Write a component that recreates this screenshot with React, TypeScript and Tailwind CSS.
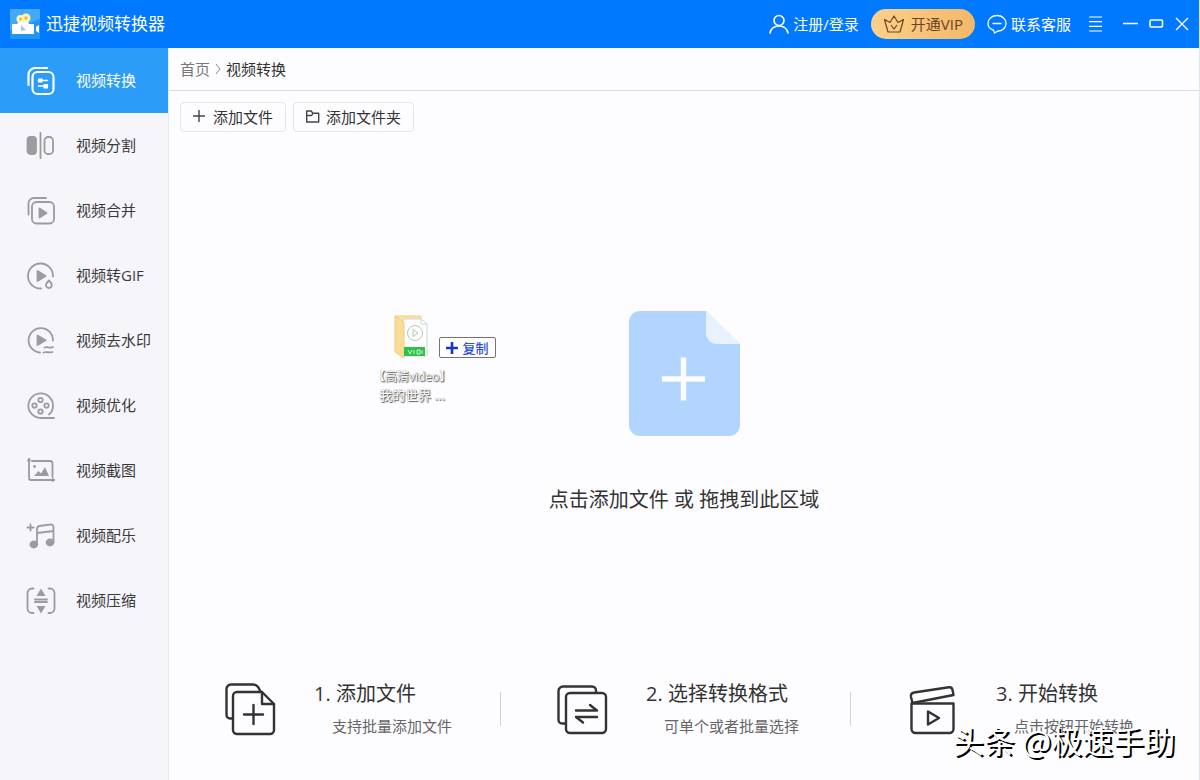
import type { ReactNode } from "react";

type IconProps = { children: ReactNode };

function NavIcon({ children }: IconProps) {
  return (
    <svg
      viewBox="0 0 30 30"
      className="h-[30px] w-[30px] shrink-0"
      fill="none"
      stroke="currentColor"
      strokeWidth="1.8"
      strokeLinecap="round"
      strokeLinejoin="round"
      aria-hidden="true"
    >
      {children}
    </svg>
  );
}

const NAV = [
  {
    label: "视频转换",
    icon: (
      <g strokeWidth="2.2">
        <path d="M2.5 19V8.500A6.500 6.500 0 0 1 9 2h12" />
        <rect x="6.500" y="6" width="21" height="22" rx="5" />
        <path d="M12.500 14.500h9M12.500 20h9" strokeWidth="1.600" />
        <path d="M12 12.500h4.500v4H12zM17.500 18h4.500v4.500h-4.500z" fill="currentColor" stroke="none" />
      </g>
    ),
  },
  {
    label: "视频分割",
    icon: (
      <>
        <rect x="1.500" y="6" width="8.500" height="17" rx="3" fill="currentColor" />
        <path d="M14.500 2v25" />
        <rect x="18.500" y="6" width="8.500" height="17" rx="3.500" />
      </>
    ),
  },
  {
    label: "视频合并",
    icon: (
      <>
        <path d="M2.500 18.500V7.500a5.500 5.500 0 0 1 5.500-5.500h12" />
        <rect x="6" y="6" width="22" height="21.500" rx="4.500" />
        <path d="M13.500 12.500v9l7-4.500z" fill="currentColor" />
      </>
    ),
  },
  {
    label: "视频转GIF",
    icon: (
      <>
        <path d="M15 27.500A12.500 12.500 0 1 1 27 15.500" />
        <path d="M11.500 10v10l8-5z" fill="currentColor" />
        <path d="M23 19.500c2 2 2.800 3.200 2.800 4.600a2.900 2.900 0 0 1-5.800 0c0-1.400 1-2.600 3-4.600z" />
      </>
    ),
  },
  {
    label: "视频去水印",
    icon: (
      <>
        <path d="M14 26.500A12.200 12.200 0 1 1 27 14.500" />
        <path d="M11.500 9.500v9.500l8-4.700z" fill="currentColor" />
        <path d="M18.500 21.500c3-1.500 5 1.200 8.500-.5M17.500 26.500c3.500-1.500 5.500 1 9-.5" />
      </>
    ),
  },
  {
    label: "视频优化",
    icon: (
      <>
        <path d="M28 27H14.500A12.300 12.300 0 1 1 27 15c0 4-1.500 6.500-4 8.500" />
        <circle cx="14.500" cy="9" r="2.200" />
        <circle cx="8.500" cy="14.500" r="2.200" />
        <circle cx="20.500" cy="14.500" r="2.200" />
        <circle cx="14.500" cy="20.500" r="2.200" />
      </>
    ),
  },
  {
    label: "视频截图",
    icon: (
      <>
        <path d="M3 3v19a2 2 0 0 0 2 2h23M6 5h18a2.500 2.500 0 0 1 2.500 2.500V21" />
        <path d="M2 4.500 3 3l1 1.500M26.500 23 28 24l-1.500 1" />
        <path d="M8 20l4.500-5 2.500 2.500 4-6.500 4 9z" fill="currentColor" stroke="none" />
        <circle cx="8.500" cy="10.500" r="1.400" fill="currentColor" stroke="none" />
      </>
    ),
  },
  {
    label: "视频配乐",
    icon: (
      <>
        <path d="M11 23V8a3 3 0 0 1 2.500-3l11-1.500a2.500 2.500 0 0 1 3 2.500v15.500M11 12l16.500-2" />
        <ellipse cx="7.800" cy="23.500" rx="3.400" ry="3" fill="currentColor" />
        <ellipse cx="24" cy="21.500" rx="3.400" ry="3" fill="currentColor" />
        <path d="M4.500 3.500v6M1.500 6.500h6" />
      </>
    ),
  },
  {
    label: "视频压缩",
    icon: (
      <>
        <path d="M7.500 2.500H6A4.500 4.500 0 0 0 1.500 7v15.500A4.500 4.500 0 0 0 6 27h1.500M22.500 2.500H24A4.500 4.500 0 0 1 28.500 7v15.500A4.500 4.500 0 0 1 24 27h-1.500" />
        <path d="M9 13.500h12M9 16h12" />
        <path d="M15 2.500 19.500 10h-9zM15 27.500 19.500 20h-9z" fill="currentColor" stroke="none" />
      </>
    ),
  },
];

const STEPS = [
  {
    title: "1. 添加文件",
    desc: "支持批量添加文件",
    icon: (
      <>
        <path d="M7 35.500H5A3.500 3.500 0 0 1 1.500 32V6A4.500 4.500 0 0 1 6 1.500h22c3 0 5.500 2.500 7 6" />
        <path d="M37 9H12a4 4 0 0 0-4 4v34a4 4 0 0 0 4 4h33a4 4 0 0 0 4-4V21z" />
        <path d="M37 9v12h12M28.500 22v19M19 31.500h19" />
      </>
    ),
  },
  {
    title: "2. 选择转换格式",
    desc: "可单个或者批量选择",
    icon: (
      <>
        <path d="M8 40.500H5A3.500 3.500 0 0 1 1.500 37V8A4.500 4.500 0 0 1 6 3.500h29a4 4 0 0 1 4 4V9" />
        <rect x="9" y="10" width="40" height="40" rx="4" />
        <path d="M19 27.500h21l-7-5.500M40 34H19l7 5.500" />
      </>
    ),
  },
  {
    title: "3. 开始转换",
    desc: "点击按钮开始转换",
    icon: (
      <>
        <path d="M5.500 20 4 14c-.5-2.500.5-4 3-4.500l35-5.200c2-.3 3 .5 3.500 2.500l1 5.200z" />
        <path d="M4.500 20.500h42V46a4 4 0 0 1-4 4h-34a4 4 0 0 1-4-4z" />
        <path d="M21 28.500v13l11-6.500z" />
      </>
    ),
  },
];

function TopBar() {
  return (
    <header className="flex h-12 items-center bg-[#0078ff] pl-2.5 pr-2 text-[15px] text-white">
      <svg viewBox="0 0 30 30" className="h-[30px] w-[30px] shrink-0" aria-hidden="true">
        <rect width="30" height="30" fill="#2295f3" />
        <path d="M0 0h30v10L0 22z" fill="#45aaf6" />
        <circle cx="10.500" cy="10" r="4" fill="#fff3b0" />
        <circle cx="16" cy="9" r="4.500" fill="#fff3b0" />
        <circle cx="10.500" cy="10" r="1.500" fill="#e3b94a" />
        <circle cx="16" cy="9" r="1.700" fill="#e3b94a" />
        <path d="M2 15h5l2-2h9l1 2h5v10H2zM26 18l3-2v8l-3-2z" fill="#fff" />
        <path d="M11 16v6l5-1z" fill="#a8c8ea" />
      </svg>
      <h1 className="ml-1.5 text-[17px]">迅捷视频转换器</h1>

      <div className="ml-auto flex items-center">
        <button type="button" className="flex items-center gap-1">
          <svg viewBox="0 0 20 20" className="h-5 w-5" fill="none" stroke="currentColor" strokeWidth="1.600" strokeLinecap="round" aria-hidden="true">
            <circle cx="10" cy="6.500" r="5" />
            <path d="M1 19c1-4.500 4-7 9-7s8 2.500 9 7" />
          </svg>
          注册/登录
        </button>
        <button
          type="button"
          className="ml-3 flex h-[30px] items-center gap-1.5 rounded-full bg-linear-to-r from-[#fbd18b] to-[#f3b768] px-3 text-[#6b4423]"
        >
          <svg viewBox="0 0 22 20" className="h-5 w-[22px]" fill="none" stroke="currentColor" strokeWidth="1.200" strokeLinejoin="round" aria-hidden="true">
            <path d="M5 18 1.500 5.500 7 8.500 11 2l4 6.500 5.500-3L17 18z" />
            <path d="m8 11 3 4 3-4" />
          </svg>
          开通VIP
        </button>
        <button type="button" className="ml-3 flex items-center gap-1">
          <svg viewBox="0 0 20 20" className="h-5 w-5" fill="none" stroke="currentColor" strokeWidth="1.300" strokeLinecap="round" aria-hidden="true">
            <path d="M6.500 16.200C3 15 1 12.500 1 9.500 1 5 5 1.500 10 1.500s9 3.500 9 8-4 7.500-8 7.500l-3.500 2z" />
            <path d="M6 9.500h8" />
          </svg>
          联系客服
        </button>
        <button type="button" aria-label="菜单" className="ml-[18px]">
          <svg viewBox="0 0 16 16" className="h-4 w-4" stroke="currentColor" strokeWidth="1.200" aria-hidden="true">
            <path d="M0 1h13M0 5.700h13M0 10.300h13M0 15h13" />
          </svg>
        </button>
        <button type="button" aria-label="最小化" className="ml-[18px]">
          <svg viewBox="0 0 16 16" className="h-4 w-4" stroke="currentColor" strokeWidth="1.500" aria-hidden="true">
            <path d="M0 7.500h15" />
          </svg>
        </button>
        <button type="button" aria-label="最大化" className="ml-2.5">
          <svg viewBox="0 0 16 16" className="h-4 w-4" fill="none" stroke="currentColor" strokeWidth="1.500" aria-hidden="true">
            <rect x="1" y="4" width="12.500" height="7" rx="1" />
          </svg>
        </button>
        <button type="button" aria-label="关闭" className="ml-2.5">
          <svg viewBox="0 0 16 16" className="h-4 w-4" stroke="currentColor" strokeWidth="1.400" aria-hidden="true">
            <path d="m1 2 12 12M13 2 1 14" />
          </svg>
        </button>
      </div>
    </header>
  );
}

function Sidebar() {
  return (
    <nav className="w-[169px] shrink-0 border-r border-[#e9e8ed] bg-[#f6f5f9]">
      {NAV.map((item, i) => (
        <a
          key={item.label}
          href="#"
          className={
            i === 0
              ? "flex h-[65px] items-center gap-5 bg-[#2b9df9] pl-[26px] text-[15px] text-white"
              : "flex h-[65px] items-center gap-5 pl-[26px] text-[15px] text-[#9c9b9f]"
          }
        >
          <NavIcon>{item.icon}</NavIcon>
          <span className={i === 0 ? "" : "text-[#3a3a3c]"}>{item.label}</span>
        </a>
      ))}
    </nav>
  );
}

// File being dragged over the drop area, with its copy hint
function DraggedFile() {
  return (
    <div className="absolute left-[204px] top-[182px] w-[78px] text-center text-[12px] leading-[18px] text-white [text-shadow:1px_1px_1px_#555,0_0_1px_#666]">
      <svg viewBox="0 0 36 46" className="mx-auto h-[46px] w-9" aria-hidden="true">
        <path d="M1 2h26v38H8z" fill="#fbe3a6" stroke="#efcf86" />
        <path d="M9 5h18l6 5v32H9z" fill="#fdfefd" stroke="#c9d8d3" />
        <path d="M27 5v5h6" fill="none" stroke="#c9d8d3" />
        <circle cx="21" cy="19" r="7.500" fill="none" stroke="#b3cabd" />
        <path d="M19 15.500v7l5-3.500z" fill="none" stroke="#a5ccb0" />
        <path d="M1 2l9 6v36l-9-6z" fill="#fbdc97" stroke="#f1cd80" />
        <path d="M10 33h21v9H10z" fill="#2fc14c" />
        <path d="M14 36l2 4 2-4M20 36v4M23 36v4h3v-4zM28 36v4" fill="none" stroke="#c8f3cf" />
      </svg>
      <p className="mt-2 whitespace-nowrap">【高清video】</p>
      <p className="whitespace-nowrap text-[13px]">我的世界 ...</p>
      <div className="absolute left-[66px] top-[23px] flex h-[21px] w-[57px] items-center justify-center gap-1 rounded-[2px] border border-[#77717f] bg-white text-[13px] font-medium text-[#2f50dc] [text-shadow:none]">
        <svg viewBox="0 0 12 12" className="h-3 w-3" stroke="#1736c8" strokeWidth="2.600" aria-hidden="true">
          <path d="M6 0v12M0 6h12" />
        </svg>
        复制
      </div>
    </div>
  );
}

export default function App() {
  return (
    <div className="relative flex min-h-screen flex-col overflow-hidden border-r border-[#d9eaf4] bg-[#fdfcff] font-['Open_Sans','Noto_Sans_CJK_SC',sans-serif]">
      <TopBar />
      <div className="flex flex-1">
        <Sidebar />
        <main className="flex min-w-0 flex-1 flex-col text-[#333]">
          <div className="flex h-[43px] items-center gap-0.5 border-b border-[#dddce1] pl-[11px] text-[15px]">
            <a href="#" className="text-[#77767a]">首页</a>
            <svg viewBox="0 0 12 12" className="h-3 w-3" fill="none" stroke="#88878b" aria-hidden="true">
              <path d="m4 1 4 5-4 5" />
            </svg>
            <span>视频转换</span>
          </div>

          <div className="flex gap-[7px] px-[11px] pt-[11px] text-[15px]">
            <button type="button" className="flex h-[30px] items-center gap-1.5 rounded border border-[#e6e5ea] px-3">
              <svg viewBox="0 0 14 14" className="h-3.5 w-3.5" stroke="#444" strokeWidth="1.400" aria-hidden="true">
                <path d="M6 0v12M0 6h12" />
              </svg>
              添加文件
            </button>
            <button type="button" className="flex h-[30px] items-center gap-1.5 rounded border border-[#e6e5ea] px-3">
              <svg viewBox="0 0 14 14" className="h-3.5 w-3.5" fill="none" stroke="#444" strokeWidth="1.400" strokeLinejoin="round" aria-hidden="true">
                <path d="M.7 12V1h4.500l1.500 2.200h6V12zM.7 5.500h5l1.300-2.300" />
              </svg>
              添加文件夹
            </button>
          </div>

          <section className="relative flex flex-1 flex-col items-center pt-[179px]">
            <svg viewBox="0 0 111 125" className="h-[125px] w-[111px]" aria-hidden="true">
              <path d="M11 0h66l34 33v81a11 11 0 0 1-11 11H11a11 11 0 0 1-11-11V11A11 11 0 0 1 11 0z" fill="#b1d5ff" />
              <path d="M77 0l34 33H88a11 11 0 0 1-11-11z" fill="#e8f2ff" />
              <path d="M54.500 46.500v43M33 68h43" stroke="#fdfcff" strokeWidth="5.500" />
            </svg>
            <p className="mt-[50px] text-[20px] leading-7">点击添加文件 或 拖拽到此区域</p>
            <DraggedFile />
          </section>

          <section className="grid grid-cols-[332fr_350fr_348fr] pb-[42px]">
            {STEPS.map((step) => (
              <div key={step.title} className="group flex items-start">
                <svg
                  viewBox="0 0 51 53"
                  className="ml-14 mt-[3px] h-[53px] w-[51px] shrink-0"
                  fill="none"
                  stroke="#333"
                  strokeWidth="2.400"
                  strokeLinecap="round"
                  strokeLinejoin="round"
                  aria-hidden="true"
                >
                  {step.icon}
                </svg>
                <div className="ml-[38px] whitespace-nowrap">
                  <h2 className="text-[20px] leading-7">{step.title}</h2>
                  <p className="ml-[18px] mt-1.5 text-[15px] leading-6 text-[#66656a]">{step.desc}</p>
                </div>
                <span className="ml-auto mt-3 h-[34px] w-px bg-[#d3d2d7] group-last:hidden" />
              </div>
            ))}
          </section>
        </main>
      </div>
      <p className="absolute bottom-5 right-6 whitespace-nowrap font-['Noto_Sans_CJK_SC',sans-serif] text-[31px] leading-10 text-white [text-shadow:2px_2px_0_#000]">
        头条 @极速手助
      </p>
    </div>
  );
}
